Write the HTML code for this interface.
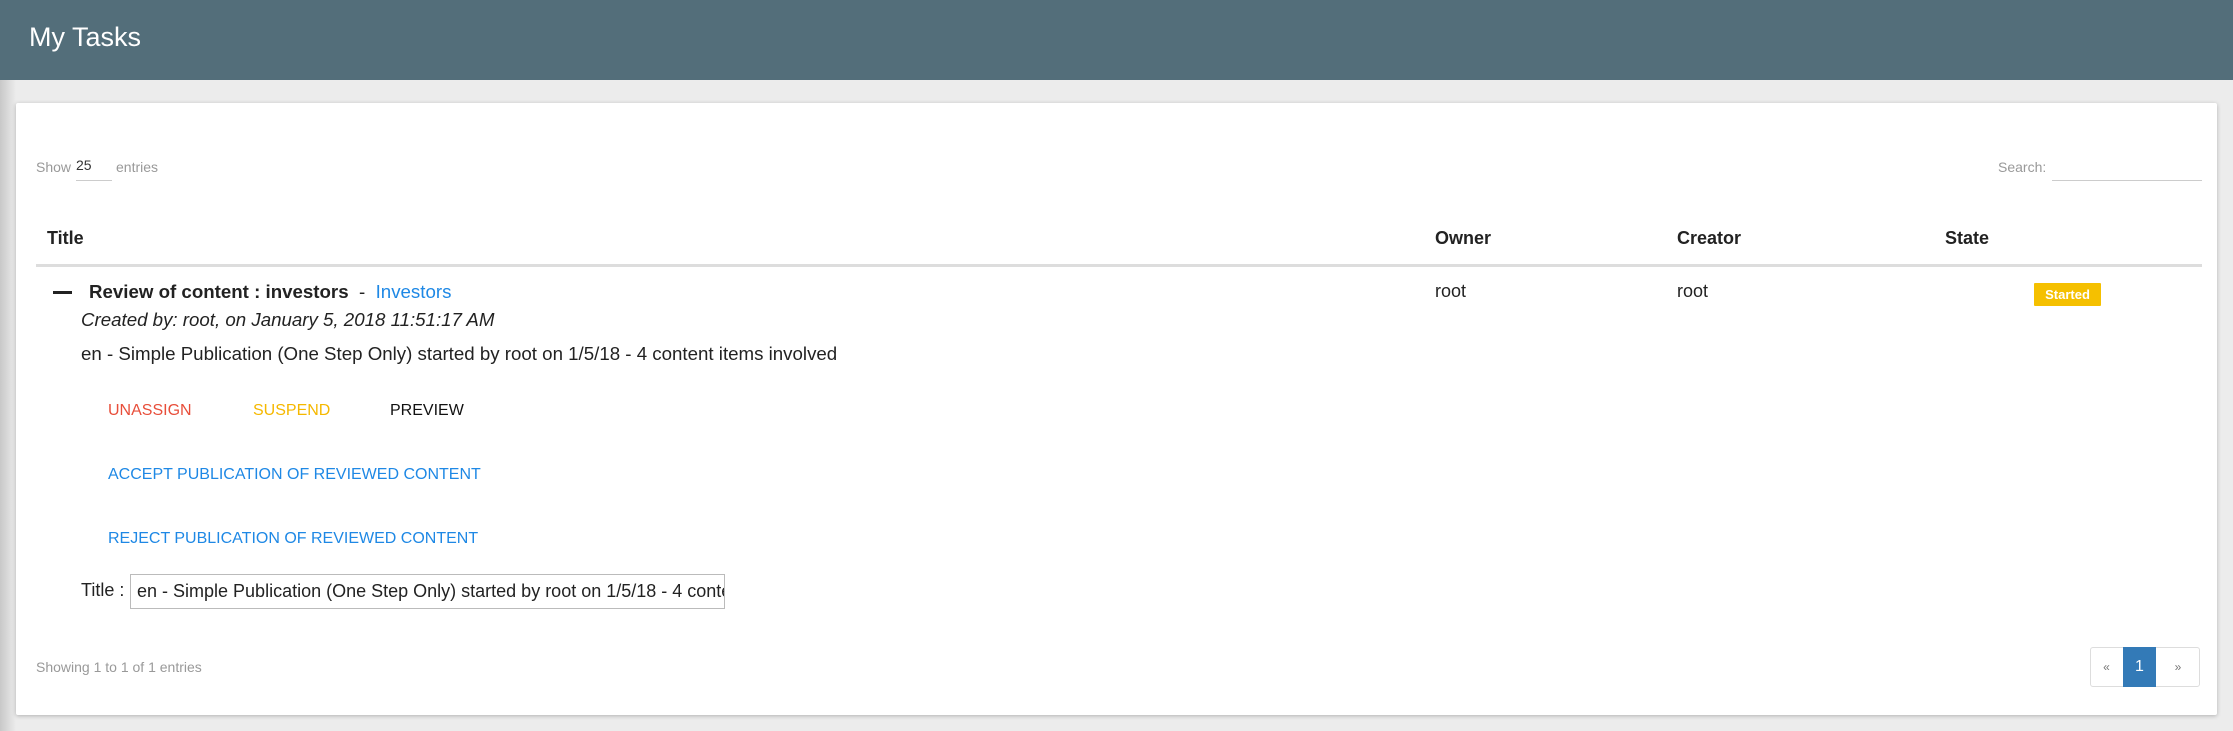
<!DOCTYPE html>
<html><head><style>
*{box-sizing:border-box;margin:0;padding:0}
body{width:2233px;height:731px;background:#ececec;font-family:"Liberation Sans",sans-serif;position:relative;overflow:hidden;color:#222}
.lg{position:absolute;left:0;top:0;width:16px;height:731px;background:linear-gradient(to right,#c8c8c8,#ececec)}
.hd{position:absolute;left:0;top:0;width:2233px;height:80px;background:#536e7a}
.hd span{position:absolute;left:29px;top:22px;color:#fff;font-size:27px}
.card{position:absolute;left:16px;top:103px;width:2201px;height:612px;background:#fff;box-shadow:0 1px 4px rgba(0,0,0,.25);border-radius:2px}
.a{position:absolute;white-space:nowrap}
.g{color:#999;font-size:14px}
.th{font-weight:bold;font-size:18px;color:#222}
.td{font-size:18.7px;color:#222}
.btn{font-size:16px}
</style></head><body>
<div class="hd"><span>My Tasks</span></div>
<div class="lg" style="top:80px;height:651px"></div>
<div class="card"></div>
<div class="a g" style="left:36px;top:159px">Show</div>
<div class="a" style="left:76px;top:157px;font-size:14px;color:#333">25</div>
<div class="a" style="left:76px;top:180px;width:36px;border-top:1px solid #ccc"></div>
<div class="a g" style="left:116px;top:159px">entries</div>
<div class="a g" style="left:1998px;top:159px">Search:</div>
<div class="a" style="left:2052px;top:180px;width:150px;border-top:1px solid #ccc"></div>
<div class="a th" style="left:47px;top:228px">Title</div>
<div class="a th" style="left:1435px;top:228px">Owner</div>
<div class="a th" style="left:1677px;top:228px">Creator</div>
<div class="a th" style="left:1945px;top:228px">State</div>
<div class="a" style="left:36px;top:264px;width:2166px;border-top:3px solid #ddd"></div>
<div class="a" style="left:53px;top:291px;width:19px;border-top:3px solid #222"></div>
<div class="a td" style="left:89px;top:281px"><b>Review of content : investors</b> &nbsp;- &nbsp;<span style="color:#1e88e5">Investors</span></div>
<div class="a td" style="left:1435px;top:281px;font-size:18px">root</div>
<div class="a td" style="left:1677px;top:281px;font-size:18px">root</div>
<div class="a" style="left:2034px;top:283px;width:67px;height:23px;background:#f5c000;color:#fff;font-weight:bold;font-size:13px;text-align:center;line-height:23px;border-radius:1px">Started</div>
<div class="a td" style="left:81px;top:309px;font-style:italic">Created by: root, on January 5, 2018 11:51:17 AM</div>
<div class="a td" style="left:81px;top:343px">en - Simple Publication (One Step Only) started by root on 1/5/18 - 4 content items involved</div>
<div class="a btn" style="left:108px;top:402px;color:#e84e3a">UNASSIGN</div>
<div class="a btn" style="left:253px;top:402px;color:#f5b800">SUSPEND</div>
<div class="a btn" style="left:390px;top:402px;color:#111">PREVIEW</div>
<div class="a btn" style="left:108px;top:466px;color:#1e88e5">ACCEPT PUBLICATION OF REVIEWED CONTENT</div>
<div class="a btn" style="left:108px;top:530px;color:#1e88e5">REJECT PUBLICATION OF REVIEWED CONTENT</div>
<div class="a td" style="left:81px;top:580px;font-size:18px">Title :</div>
<div class="a td" style="left:130px;top:574px;width:595px;height:35px;border:1px solid #bbb;padding:6px 0 0 6px;overflow:hidden;font-size:18px">en - Simple Publication (One Step Only) started by root on 1/5/18 - 4 content items involved</div>
<div class="a g" style="left:36px;top:659px">Showing 1 to 1 of 1 entries</div>
<div class="a" style="left:2090px;top:647px;width:110px;height:40px;border:1px solid #ddd;border-radius:3px"></div>
<div class="a" style="left:2090px;top:660px;width:33px;text-align:center;color:#777;font-size:12px">«</div>
<div class="a" style="left:2123px;top:647px;width:33px;height:40px;background:#337ab7;color:#fff;text-align:center;line-height:40px;font-size:16px">1</div>
<div class="a" style="left:2156px;top:660px;width:44px;text-align:center;color:#777;font-size:12px">»</div>
</body></html>
